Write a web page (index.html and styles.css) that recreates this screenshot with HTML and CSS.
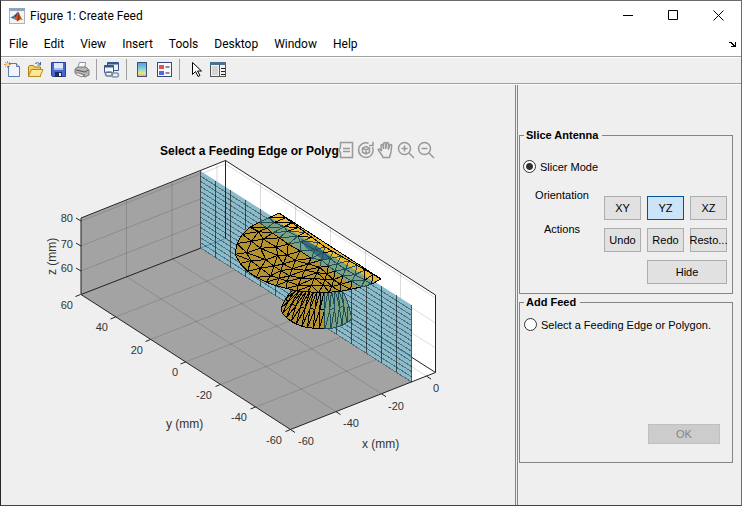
FILE: index.html
```html
<!DOCTYPE html>
<html lang="en">
<head>
<meta charset="utf-8">
<title>Figure 1: Create Feed</title>
<link rel="stylesheet" href="styles.css">
</head>
<body>
<div class="window">
  <header class="titlebar">
    <svg class="app-icon" width="16" height="16" viewBox="0 0 16 16">
      <rect x=".5" y=".5" width="15" height="15" fill="#f4f4f4" stroke="#a9b4be"/>
      <rect width="16" height="3" fill="#8ea6bd"/>
      <path d="M1.500 9.500L5 7.500L7 9.500L4.500 11z" fill="#3c78a8"/>
      <path d="M5 7.500C7 6.500 8 4 9 3.500L7.500 10L6 9z" fill="#2b4f7c"/>
      <path d="M9 3.500C10.500 5 11.500 9.500 14 12C12 11 11 11 8.500 13.500C7.500 12 6.500 11.500 4.500 11C7 10.500 8 7 9 3.500z" fill="#d4541c"/>
      <path d="M9 4C9 7 9 10 8.500 13L10.500 11.200C10.600 8 10 6 9 4z" fill="#8d2a13"/>
    </svg>
    <h1>Figure 1: Create Feed</h1>
    <div class="window-controls">
      <button aria-label="Minimize"><svg width="11" height="11" viewBox="0 0 11 11"><path d="M0 5.500H10"/></svg></button>
      <button aria-label="Maximize"><svg width="11" height="11" viewBox="0 0 11 11"><path d="M.5.5h9v9h-9z"/></svg></button>
      <button aria-label="Close"><svg width="11" height="11" viewBox="0 0 11 11"><path d="M.5.5l10 10M10.500.5l-10 10"/></svg></button>
    </div>
  </header>
  <nav class="menubar">
    <button>File</button><button>Edit</button><button>View</button><button>Insert</button><button>Tools</button><button>Desktop</button><button>Window</button><button>Help</button>
    <button class="dock" aria-label="Dock figure"><svg width="8" height="6" viewBox="0 0 8 6"><path d="M0 1h3v1h1v1h1v1h1V1h1v5H2V5h2V4H3V3H2V2H0z" fill="#000"/></svg></button>
  </nav>
  <div class="toolbar">
    <button aria-label="New figure"><svg viewBox="0 0 17 17">
      <path d="M4.500 2.500h8l3 3v10h-11z" fill="#eef5fd" stroke="#5c7cae"/><path d="M12.500 2.500v3h3" fill="#cfdff2" stroke="#5c7cae"/>
      <path d="M3.500 0v7M0 3.500h7M1 1l5 5M6 1l-5 5" stroke="#e38b4c"/><circle cx="3.500" cy="3.500" r="1.500" fill="#f8dd83"/></svg></button>
    <button aria-label="Open"><svg viewBox="0 0 17 17">
      <path d="M1.500 15.500v-10l1-1h4l1 1.500h6v9.500z" fill="#f0cf62" stroke="#ad7d16"/><path d="M1.500 15.500l3-7h11.500l-3 7z" fill="#fbe998" stroke="#b88a1c"/>
      <path d="M8 2.500q3-2 5 .5M13.500 1v3h-3" fill="none" stroke="#44659a"/></svg></button>
    <button aria-label="Save"><svg viewBox="0 0 17 17">
      <path d="M1.500 1.500h14v14h-13l-1-1z" fill="#4566d4" stroke="#2a3f99"/><path d="M4 2h9v6H4z" fill="#dde8f8"/><path d="M4 7h9v2H4z" fill="#a9bce8"/><path d="M5 11h7v5H5z" fill="#222a52"/><path d="M9 12h2v3H9z" fill="#e8edf8"/></svg></button>
    <button aria-label="Print"><svg viewBox="0 0 17 17">
      <path d="M4.500 7.500l2-6h6l-1 7z" fill="#fff" stroke="#8895a6"/><path d="M2 8l3-2h8l3 3v5l-4 2L2 12z" fill="#b7b7ba" stroke="#77777b"/><path d="M3 9l9 2 3-2M5 12l7 2" fill="none" stroke="#555"/><path d="M4 11.500l7 2.500-2 2-6-2.500z" fill="#eee" stroke="#888"/><path d="M13 11h1v1h-1z" fill="#7a5"/></svg></button>
    <span class="separator"></span>
    <button aria-label="Link plot"><svg viewBox="0 0 17 17">
      <path d="M4.500 1.500h11v8h-11z" fill="#edf2f9" stroke="#33568e"/><path d="M4.500 2.500h11" stroke="#33568e" stroke-width="2"/><path d="M1.500 4.500h9v7h-9z" fill="#f5f8fc" stroke="#33568e"/><path d="M1.500 5.500h9" stroke="#33568e" stroke-width="2"/>
      <rect x="2.500" y="11" width="7" height="4" rx="2" fill="none" stroke="#697f99" stroke-width="1.500"/><rect x="8.500" y="12" width="7" height="4" rx="2" fill="none" stroke="#8296ac" stroke-width="1.500"/></svg></button>
    <span class="separator"></span>
    <button aria-label="Insert colorbar"><svg viewBox="0 0 17 17">
      <defs><linearGradient id="bar" x2="0" y2="1"><stop stop-color="#688fe4"/><stop offset=".4" stop-color="#70d1d9"/><stop offset=".75" stop-color="#eee488"/><stop offset="1" stop-color="#eea26c"/></linearGradient></defs>
      <rect x="4.500" y="1.500" width="9" height="14" fill="url(#bar)" stroke="#3b5380"/></svg></button>
    <button aria-label="Insert legend"><svg viewBox="0 0 17 17">
      <rect x="1.500" y="1.500" width="14" height="14" fill="#f7f9ff" stroke="#35497d"/><path d="M3 4h5v4H3z" fill="#e45252"/><path d="M3 10h5v4H3z" fill="#5567e0"/><path d="M9.500 6h4M9.500 12h4" stroke="#222"/></svg></button>
    <span class="separator"></span>
    <button aria-label="Edit plot"><svg viewBox="0 0 17 17"><path d="M6.500 1.500v12l3-3 2.500 5 2-1-2.500-4.500h4z" fill="#fff" stroke="#000"/></svg></button>
    <button aria-label="Property inspector"><svg viewBox="0 0 17 17">
      <rect x="1.500" y="1.500" width="15" height="14" fill="#f2f2f2" stroke="#555"/><path d="M1 2.500h16" stroke="#4a7095" stroke-width="3"/><path d="M3 5h6v9H3z" fill="#d5d5d5"/><path d="M10.500 4v11" stroke="#555"/><path d="M12 7.500h4M12 10.500h4M12 13.500h4" stroke="#222"/></svg></button>
  </div>
  <main class="content">
    <section class="figure" aria-label="Antenna view">
      <div class="axes-header">
        <h2>Select a Feeding Edge or Polyg</h2>
        <div class="axes-tools">
          <button aria-label="Data tips"><svg viewBox="0 0 18 18"><path d="M3.500 1.500h12v15h-12v-5l-2-2.500 2-2.500zM6 7.500h7M6 10.500h7"/></svg></button>
          <button aria-label="Rotate"><svg viewBox="0 0 18 18"><path d="M11.500 2.300A7.300 7.300 0 1 0 15.500 6M12 4.500h4V.8M9 5.500l3.500 1.700v4L9 13l-3.500-1.800v-4zM5.500 7.200L9 9l3.500-1.800M9 9v4"/></svg></button>
          <button aria-label="Pan"><svg viewBox="0 0 18 18"><path d="M6 16.500C5 13 2 11 1.200 8.500c.8-1.200 2-.5 3.300 1.500L4 4.500c.2-1.500 1.800-1.500 2 0L6.500 8V2.500c.3-1.500 2-1.500 2.200 0V8L9.500 2.500c.3-1.500 2-1.200 2 .3L11.300 8.500l1.500-4.300c.6-1.200 2-.7 1.900.6L14 11c-.3 2-1 3-1.500 5.500z"/></svg></button>
          <button aria-label="Zoom in"><svg viewBox="0 0 18 18"><circle cx="7.500" cy="7.500" r="6"/><path d="M12 12l5 5M4.500 7.500h6M7.500 4.500v6"/></svg></button>
          <button aria-label="Zoom out"><svg viewBox="0 0 18 18"><circle cx="7.500" cy="7.500" r="6"/><path d="M12 12l5 5M4.500 7.500h6"/></svg></button>
        </div>
      </div>
      <svg class="axes" viewBox="1 160 514 300">
        <path fill="#fff" d="M81 218L225.500 160.500L435.500 295V372.500L290.500 429.500L81 294.500z"/>
        <path fill="#a3a3a3" d="M81 218L200.500 171V248L411.500 382L290.500 429.500L81 294.500z"/>
        <g id="grid" class="grid"></g>
        <path class="edge" d="M225.500 160.500V238.500L435.500 372.500M225.500 238.500L81 294.500"/>
        <path class="edge" d="M81 294.500V218L225.500 160.500L435.500 295V372.500L290.500 429.500z"/>
        <path fill="#8bbccc" d="M200.500 171V248L411.500 382V305z"/>
        <path class="hidden-edge" d="M200.500 248L225.500 238.500L411.500 357"/>
        <path class="edge" d="M225.500 187V238.500"/>
        <g id="slice" class="slice"></g>
        <g id="antenna"></g>
        <g id="ticks" class="edge"></g>
        <g class="labels">
          <g text-anchor="end">
            <text x="73" y="222">80</text><text x="73" y="248">70</text><text x="73" y="272">60</text>
            <text x="73" y="309">60</text><text x="108" y="331">40</text><text x="143" y="354">20</text><text x="178" y="376">0</text>
            <text x="212" y="399">-20</text><text x="247" y="421">-40</text><text x="282" y="444">-60</text>
          </g>
          <text x="298" y="445">-60</text><text x="343" y="427">-40</text><text x="388" y="410">-20</text><text x="433" y="392">0</text>
          <g class="axis-names">
            <text x="166" y="428">y (mm)</text><text x="362" y="448">x (mm)</text><text transform="translate(56 275) rotate(-90)">z (mm)</text>
          </g>
        </g>
      </svg>
    </section>
    <aside class="controls">
      <fieldset class="slice-panel">
        <legend>Slice Antenna</legend>
        <label class="option"><input type="radio" name="mode" checked>Slicer Mode</label>
        <div class="slice-tools">
          <div class="captions"><span>Orientation</span><span>Actions</span></div>
          <div class="buttons">
            <button>XY</button><button class="selected">YZ</button><button>XZ</button>
            <button>Undo</button><button>Redo</button><button>Resto...</button>
            <button class="wide">Hide</button>
          </div>
        </div>
      </fieldset>
      <fieldset class="feed-panel">
        <legend>Add Feed</legend>
        <label class="option"><input type="radio" name="mode-feed">Select a Feeding Edge or Polygon.</label>
        <button class="ok" disabled>OK</button>
      </fieldset>
    </aside>
  </main>
</div>
<script src="plot.js"></script>
</body>
</html>
```
FILE: styles.css
```css
* { box-sizing: border-box; }
body { margin: 0; font: 11px/12px "Liberation Sans", Arial, sans-serif; color: #000; background: #efefef; }
button { font: inherit; color: inherit; margin: 0; padding: 0; border: 0; background: none; }
h1, h2 { margin: 0; }
.window { display: flex; flex-direction: column; min-height: 100vh; border: 1px solid #6c6a6c; border-left-color: #262626; border-bottom-color: #444; }

.titlebar { display: flex; align-items: center; height: 29px; padding-left: 8px; gap: 5px; background: #fff; }
.titlebar h1 { padding-top: 1px; font: 12px/16px Roboto, "Open Sans", sans-serif; }
.window-controls { display: flex; margin-left: auto; }
.window-controls button { display: grid; place-items: center; width: 45px; height: 28px; }
.window-controls path { fill: none; stroke: #000; }

.menubar { display: flex; align-items: center; gap: 16px; height: 27px; padding: 1px 4px 0 8px; background: #fff; border-bottom: 1px solid #a0a0a0; font: 12px/16px Roboto, "Open Sans", sans-serif; }
.dock { margin-left: auto; display: flex; }

.toolbar { display: flex; align-items: center; gap: 6px; height: 27px; padding: 0 3px 2px; border-top: 1px solid #fff; border-bottom: 1px solid #a0a0a0; }
.toolbar button, .toolbar svg { display: block; width: 17px; height: 17px; }
.separator { width: 1px; height: 21px; background: #a0a0a0; }

.content { display: flex; flex: 1; border-top: 1px solid #fafafa; }
.figure { flex: 1; min-width: 0; padding-top: 55px; }
.axes-header { display: flex; height: 20px; padding-left: 159px; }
.axes-header h2 { width: 177px; font-size: 12px; line-height: 22px; white-space: nowrap; }
.axes-tools { display: flex; gap: 2px; }
.axes-tools svg { display: block; width: 18px; height: 18px; fill: none; stroke: #999; stroke-width: 1.5; }
.axes { display: block; width: 100%; }
.edge { fill: none; stroke: #222; }
.hidden-edge { fill: none; stroke: #4f8fab; }
.grid { fill: none; stroke: #000; stroke-opacity: .14; }
.slice { fill: none; stroke: #111; stroke-opacity: .65; shape-rendering: crispEdges; }
.slice .rows { stroke-opacity: .45; }
.mesh { fill: none; stroke: #000; shape-rendering: crispEdges; }
.mesh.shaded { stroke: #1d4f5c; }
.labels { fill: #333; font-size: 11px; }
.axis-names { font-size: 12px; }

.controls { width: 226px; padding: 43px 8px 0 1px; border-left: 3px double #858585; }
fieldset { display: flex; flex-direction: column; margin: 0; padding: 0; border: 1px solid #858585; }
legend { margin-left: 4px; padding: 0 4px 0 2px; font-weight: bold; line-height: 14px; }
.slice-panel { height: 166px; }
.feed-panel { height: 168px; margin-top: 1px; }
.option { display: flex; align-items: center; gap: 4px; padding-left: 3px; }
.slice-panel .option { margin-top: 18px; }
.feed-panel .option { margin-top: 9px; padding-left: 4px; }
.option input { appearance: none; width: 13px; height: 13px; margin: 0; border: 1px solid #333; border-radius: 50%; background: #fff; }
.option input:checked { background: radial-gradient(circle, #333 3px, #fff 4px); }
.slice-tools { display: flex; margin-top: 16px; }
.captions { display: flex; flex: 1; flex-direction: column; align-items: center; gap: 22px; }
.buttons { display: grid; grid-template-columns: repeat(3, 37px); grid-auto-rows: 24px; gap: 8px 6px; padding: 7px 5px 0 0; }
.buttons button { display: flex; align-items: center; justify-content: center; border: 1px solid #adadad; background: #e1e1e1; white-space: nowrap; }
.buttons .selected { border-color: #005499; background: #cce4f7; }
.buttons .wide { grid-column: 2 / 4; }
.ok { width: 72px; height: 20px; margin: auto 12px 18px auto; border: 1px solid #bfbfbf; background: #ccc; color: #858585; }
```
FILE: plot.js
```js
const svg = (parent, d, attrs = {}) => {
  const p = document.createElementNS("http://www.w3.org/2000/svg", "path");
  p.setAttribute("d", d);
  for (const k in attrs) p.setAttribute(k, attrs[k]);
  document.getElementById(parent).appendChild(p);
};
const pt = p => p[0].toFixed(1) + " " + p[1].toFixed(1);
const line = (...ps) => "M" + ps.map(pt).join("L");
const lerp = (a, b, t) => [a[0] + (b[0] - a[0]) * t, a[1] + (b[1] - a[1]) * t];

// Point at a fraction of the length of a polyline
function along(points, f) {
  const lens = points.slice(1).map((p, i) => Math.hypot(p[0] - points[i][0], p[1] - points[i][1]));
  let rest = f * lens.reduce((a, b) => a + b);
  for (let i = 0; i < lens.length; i++) {
    if (rest <= lens[i] || i === lens.length - 1) return lerp(points[i], points[i + 1], rest / lens[i]);
    rest -= lens[i];
  }
}

// Axes grid and tick marks
let grid = "", ticks = "";
for (const dx of [0, 45.5, 91, 136]) {
  const y = dx * -0.393;
  if (dx) grid += line([290.5 + dx, 429.5 + y], [81 + dx, 294.5 + y], [81 + dx, 218 + y]);
  ticks += line([290.5 + dx, 429.5 + y], [295 + dx, 432.5 + y]);
}
for (let i = 0; i <= 6; i++) {
  const x = 290.5 - 35 * i, y = 429.5 - 22.5 * i;
  if (i && i < 6) grid += line([x, y], [x + 145, y - 57], [x + 145, y - 134]);
  ticks += line([x, y], [x - 5, y + 2]);
}
for (const z of [221, 246, 271]) {
  grid += line([81, z], [225.5, z - 57], [435.5, z + 77]);
  ticks += line([81, z], [76, z - 3]);
}
svg("grid", grid);
svg("ticks", ticks);

// Slicing plane
let columns = "", rows = "";
for (let i = 0; i <= 14; i++) {
  const x = 200.5 + i * 211 / 14, y = 171 + i * 134 / 14;
  columns += line([x, y], [x, y + 77]);
}
for (let i = 1; i <= 15; i++) rows += line([200.5, 171 + i * 5.13], [411.5, 305 + i * 5.13]);
svg("slice", columns);
svg("slice", rows, { class: "rows" });

// Feed cone below the reflector
const coneTop = [[293, 290], [342, 290]];
const coneBase = [[281, 308], [283, 315], [292, 322], [303, 327], [320, 329], [330, 329], [343, 325], [352, 319]];
const segments = 14;
const cone = (j, t) => {
  const a = along(coneTop, j / segments), b = along(coneBase, j / segments);
  return [a[0] + (b[0] - a[0]) * Math.pow(t, 0.7), a[1] + (b[1] - a[1]) * t];
};
svg("antenna", line([293, 290], [285, 300], ...coneBase, [348, 305], [342, 290]) + "z", { fill: "#b5942f" });
svg("antenna", line([315, 290], [328, 329], [343, 325], [352, 319], [348, 305], [342, 290]) + "z", { fill: "#7da283" });
for (let j = 0; j <= segments; j++) {
  let d = line(cone(j, 0), cone(j, 0.33), cone(j, 0.66), cone(j, 1));
  if (j < segments) {
    d += line(cone(j, 0.5), cone(j + 1, 0)) + line(cone(j, 1), cone(j + 1, 0.5)) + line(cone(j, 1), cone(j + 1, 1));
    if (j % 2 === 0) d += line(cone(j, 0.5), cone(j + 1, 0.5));
  }
  svg("antenna", d, { class: j < 9 ? "mesh" : "mesh shaded" });
}

// Reflector half-disc, its part behind the plane and the rim above the plane
const rim = [[279, 213], [260, 222], [245, 230], [237, 243], [235, 255], [243, 268], [260, 280], [280, 287], [297, 291], [317, 292.5], [337, 292], [357, 288], [370, 285], [381, 279]];
const centre = [325, 247];
svg("antenna", line(...rim) + "z", { fill: "#b5942f" });
svg("antenna", line([258, 222], [279, 213], [381, 279], [370, 285], [357, 288]) + "z", { fill: "#7da283" });
svg("antenna", line([270, 217], [279, 213], [381, 279], [374, 282]) + "z", { fill: "#e8b835" });
svg("antenna", line([300, 238], [318, 247], [334, 260], [322, 259], [306, 248]) + "z", { fill: "#376f80" });
const rings = 7;
const node = (k, i) => {
  if (!k) return centre;
  const n = lerp(centre, along(rim, i / (3 * k)), k / rings);
  if (k === rings || i === 0 || i === 3 * k) return n;
  return [n[0] + 2 * Math.sin(5 * i + 3 * k), n[1] + Math.sin(7 * k + 2 * i)];
};
let front = "", behind = "";
const edge = (a, b) => {
  const x = (a[0] + b[0]) / 2, y = (a[1] + b[1]) / 2;
  const depth = y - 222 - (x - 258) * 0.667;
  const rimDepth = y - 171 - (x - 200.5) * 0.635;
  if (depth > 0 || rimDepth < 0) front += line(a, b); else behind += line(a, b);
};
for (let k = 1; k <= rings; k++) {
  for (let i = 0; i < 3 * k; i++) edge(node(k, i), node(k, i + 1));
  for (let s = 0; s < 3; s++) for (let i = 0; i <= k; i++) {
    const n = node(k, s * k + i);
    if (i < k) edge(n, node(k - 1, s * (k - 1) + i));
    if (i > 0) edge(n, node(k - 1, s * (k - 1) + i - 1));
  }
}
svg("antenna", behind, { class: "mesh shaded" });
svg("antenna", front, { class: "mesh" });
svg("antenna", line([279, 213], [381, 279]), { class: "mesh" });
```
